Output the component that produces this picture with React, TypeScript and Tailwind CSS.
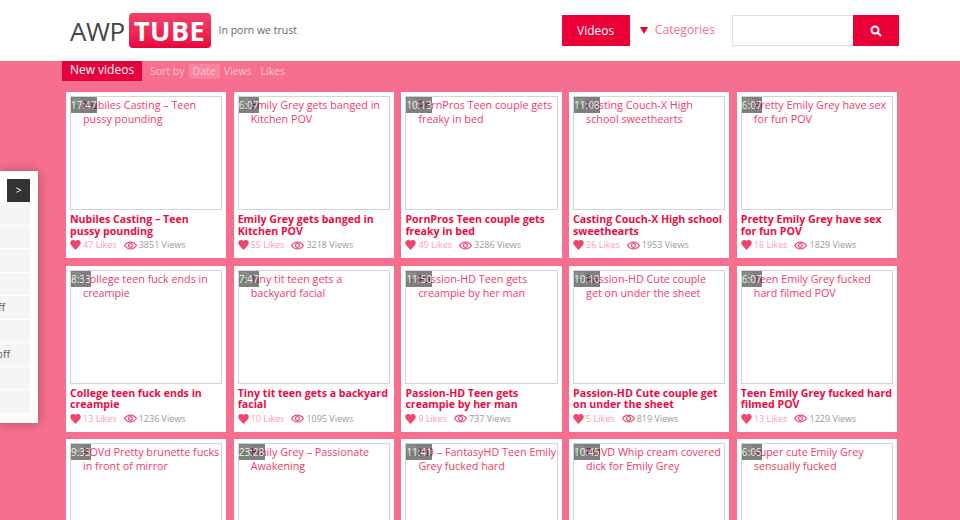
const videos = [
  ["17:47", "w-[26px]", "Nubiles Casting – Teen pussy pounding", "47", "3851"],
  ["6:07", "w-[20px]", "Emily Grey gets banged in Kitchen POV", "55", "3218"],
  ["10:13", "w-[26px]", "PornPros Teen couple gets freaky in bed", "49", "3286"],
  ["11:08", "w-[26px]", "Casting Couch-X High school sweethearts", "26", "1953"],
  ["6:07", "w-[20px]", "Pretty Emily Grey have sex for fun POV", "16", "1829"],
  ["8:33", "w-[20px]", "College teen fuck ends in creampie", "13", "1236"],
  ["7:47", "w-[20px]", "Tiny tit teen gets a backyard facial", "10", "1095"],
  ["11:50", "w-[26px]", "Passion-HD Teen gets creampie by her man", "9", "737"],
  ["10:10", "w-[26px]", "Passion-HD Cute couple get on under the sheet", "5", "819"],
  ["6:07", "w-[20px]", "Teen Emily Grey fucked hard filmed POV", "13", "1229"],
  ["9:33", "w-[20px]", "POVd Pretty brunette fucks in front of mirror", "0", "0"],
  ["23:28", "w-[26px]", "Emily Grey – Passionate Awakening", "0", "0"],
  ["11:41", "w-[26px]", "HD – FantasyHD Teen Emily Grey fucked hard", "0", "0"],
  ["10:45", "w-[26px]", "POVD Whip cream covered dick for Emily Grey", "0", "0"],
  ["6:05", "w-[20px]", "Super cute Emily Grey sensually fucked", "0", "0"],
];

function Card({ v }: { v: string[] }) {
  const [time, w, title, likes, views] = v;
  return (
    <div className="bg-white p-1 h-[166px]">
      <div className="relative h-[114px] border border-[#d4d4d4] pl-3 pt-px text-[10.75px] leading-[14px] text-[#f23a66]">
        <div className={`absolute left-0 top-0 h-4 ${w} bg-black/50 text-[10px] leading-[17px] text-[#eee] overflow-hidden whitespace-nowrap`}>
          <svg width="14" height="14" viewBox="0 0 14 14" className="absolute left-0 top-0">
            <path d="M1 1h8l3 3v4l-3 2-2-2-6 4z" fill="#8a8a8a" />
            <path d="M2 10l3-3 2 2-3 3z" fill="#4f8f3f" />
          </svg>
          <span className="relative">{time}</span>
        </div>
        {title}
      </div>
      <div className="mt-1 text-[10.6px] leading-[11.5px] font-bold text-[#ec0b43] whitespace-pre-line">{title.replace("Teen pussy", "Teen\npussy")}</div>
      <div className="flex items-center mt-[2px] text-[9px] leading-3">
        <svg width="11" height="10" viewBox="0 0 24 22" className="text-[#f0456f]"><path fill="currentColor" d="M12 22 2 11C-2 5 2 0 7 0c2 0 4 1 5 3 1-2 3-3 5-3 5 0 9 5 5 11z" /></svg>
        <span className="ml-[2px] text-[#f99cb4]">{likes} Likes</span>
        <svg width="13" height="9" viewBox="0 0 26 16" className="ml-[7px] text-[#f0456f]" fill="none" stroke="currentColor" strokeWidth="2.4"><path d="M1 8c6-9 18-9 24 0-6 9-18 9-24 0z" /><circle cx="13" cy="8" r="4" /></svg>
        <span className="ml-[2px] text-[#999]">{views} Views</span>
      </div>
    </div>
  );
}

export default function App() {
  return (
    <div className="relative h-[520px] w-[960px] overflow-hidden bg-[#f76f8e] font-['Open_Sans',sans-serif]">
      <header className="h-[61px] bg-white flex items-center pl-[70px] pr-[61px]">
        <span className="text-[26px] leading-none text-[#444] tracking-[-0.5px]">AWP</span>
        <span className="ml-1 h-[35px] w-[82px] rounded bg-gradient-to-b from-[#f2406d] to-[#e8003d] text-white text-[27px] font-bold tracking-[0.5px] flex items-center justify-center leading-none">TUBE</span>
        <span className="ml-2 text-[10.5px] text-[#666]">In porn we trust</span>
        <nav className="ml-auto flex items-center">
          <a className="h-[31px] w-[68px] bg-[#ec0038] text-white text-xs flex items-center justify-center">Videos</a>
          <span className="ml-[10px] w-0 h-0 border-x-4 border-x-transparent border-t-[7px] border-t-[#ec0038]" />
          <a className="ml-[7px] text-[12.2px] text-[#f76f8e]">Categories</a>
        </nav>
        <div className="ml-[17px] flex h-[31px]">
          <div className="w-[121px] border border-[#ddd] border-r-0 bg-white" />
          <button className="w-[46px] bg-[#ec0038] flex items-center justify-center">
            <svg width="12" height="12" viewBox="0 0 24 24" fill="none" stroke="#fff" strokeWidth="4"><circle cx="10" cy="10" r="7" /><path d="m15 15 7 7" /></svg>
          </button>
        </div>
      </header>

      <div className="pl-[62px] h-[31px] flex items-start">
        <div className="h-5 w-20 bg-[#e8003d] text-white text-xs leading-[17px] text-center">New videos</div>
        <div className="ml-2 flex items-center text-[10.5px] text-[#fdc4d2] h-5 pt-px">
          <span>Sort by</span>
          <span className="ml-1 px-1 bg-white/15 leading-[15px]">Date</span>
          <span className="ml-1">Views</span>
          <span className="ml-[9px]">Likes</span>
        </div>
      </div>

      <main className="ml-[66px] w-[831px] grid grid-cols-5 gap-x-[7.5px] gap-y-[7.5px]">
        {videos.map((v, i) => <Card key={i} v={v} />)}
      </main>

      <aside className="absolute left-0 top-[171px] h-[252px] w-[38px] bg-white shadow-[0_0_12px_rgba(0,0,0,0.3)] pt-2 pr-2">
        <div className="flex justify-end h-[23px]">
          <div className="w-[23px] bg-[#333] text-white text-[10px] flex items-center justify-center">&gt;</div>
        </div>
        {["", "", "", "", "ff", "", "off", "", ""].map((t, i) => (
          <div key={i} className={`h-[23.55px] overflow-hidden bg-[#f5f5f5] border-b border-white flex items-center justify-end text-[10.5px] text-[#555] ${t === "off" ? "pr-5" : "pr-[25px]"}`}>{t}</div>
        ))}
      </aside>
    </div>
  );
}
